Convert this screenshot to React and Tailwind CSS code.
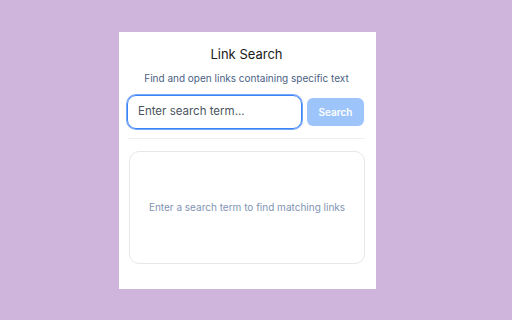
import React from "react";

export default function App() {
  return (
    <div className="w-[512px] h-[320px] bg-[#cfb5dc] flex justify-start pl-[119px] pt-[32px]" style={{ fontFamily: "Inter, 'Liberation Sans', sans-serif" }}>
      <div className="w-[257px] h-[257px] bg-white flex flex-col pl-[9px] pr-[11px]">
        <h1 className="mt-[14px] text-center text-[13px] leading-[16px] text-[#1a1a1a] font-normal">Link Search</h1>
        <p className="mt-[9px] text-center text-[10px] leading-[14px] text-[#4a6183]">Find and open links containing specific text</p>
        <div className="mt-[10px] flex items-center gap-[5px]">
          <div className="-ml-px w-[175px] h-[34px] rounded-[9px] border border-[#3b82f6] ring-1 ring-[#3b82f6]/70 flex items-center px-[10px]">
            <span className="text-[11.5px] text-[#4b5563]">Enter search term...</span>
          </div>
          <button className="w-[57px] h-[28px] rounded-[6px] bg-[#9ec5fb] text-white text-[10px] font-semibold">Search</button>
        </div>
        <div className="mt-[9px] h-px bg-[#eceef2]" />
        <div className="mt-[12px] ml-px h-[113px] rounded-[10px] border border-[#e5e7eb] flex items-center justify-center">
          <span className="text-[10px] text-[#8194b3]">Enter a search term to find matching links</span>
        </div>
      </div>
    </div>
  );
}
